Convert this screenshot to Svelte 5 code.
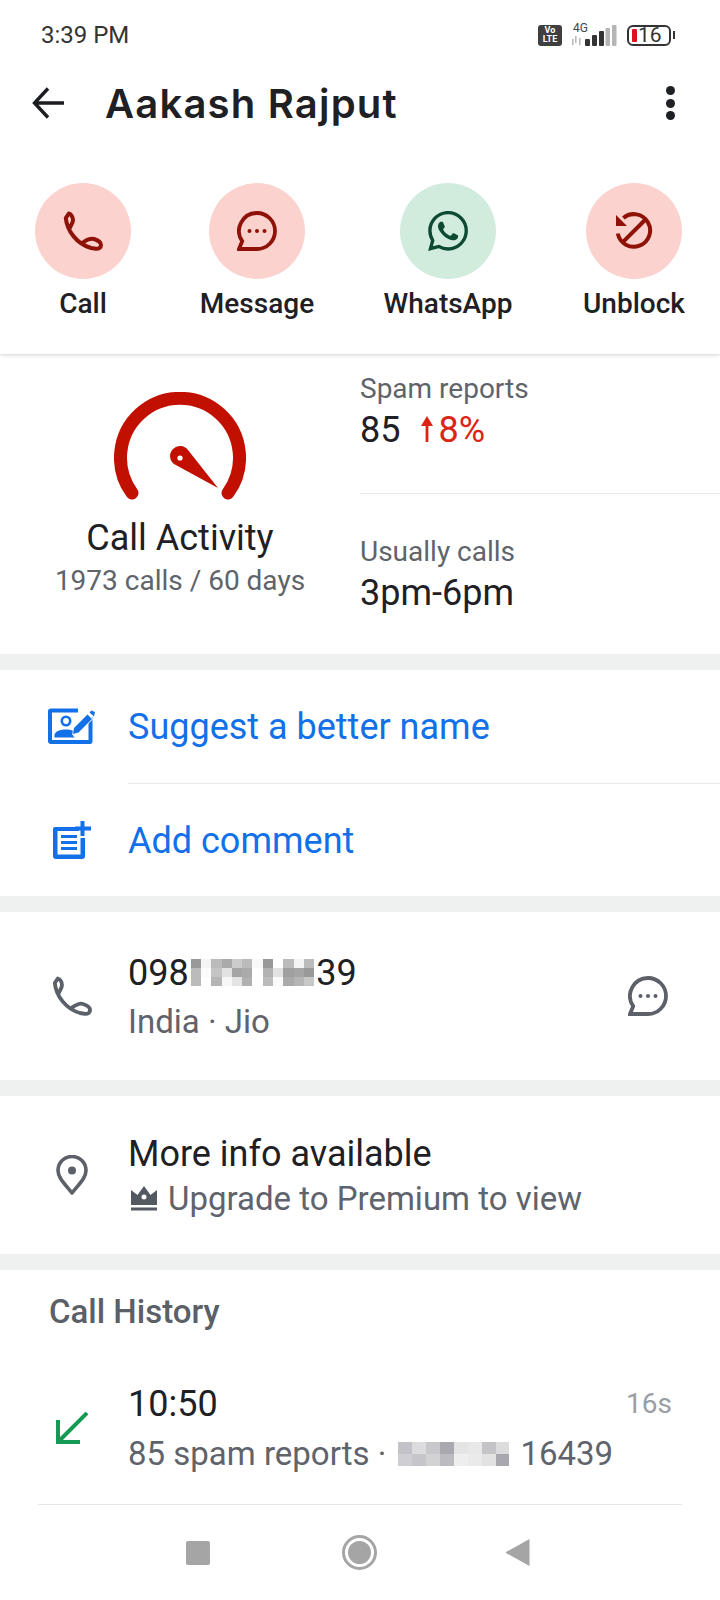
<script>
  const actions = [
    { label: 'Call', kind: 'red', icon: 'phone' },
    { label: 'Message', kind: 'red', icon: 'bubble' },
    { label: 'WhatsApp', kind: 'green', icon: 'whatsapp' },
    { label: 'Unblock', kind: 'red', icon: 'unblock' }
  ];

  const phoneD = 'M2.800 7 C4 20 14 33 28 37 L33 37.800 C36 38 38 36.500 38 34 C38 31 34 29 31 28 C28 27 23 29 20 31.500 M2.800 7 L5.800 2.500 C8 3 10 6 10 9 C10 12 8 14 6.500 17.500';
  const bubbleD = 'M20 2 A18 18 0 0 1 20 38 H2 L5.2 30.2 A18 18 0 0 1 20 2 Z';

  const blurPhone = [
    ['#999', '#f4f4f4', '#bbb', '#aaa', '#ccc', '#bbb', '#f8f8f8', '#999', '#fff', '#bbb', '#f4f4f4', '#bbb'],
    ['#bbb', '#fbfbfb', '#c4c4c4', '#e2e2e2', '#a5a5a5', '#aaa', '#fff', '#b2b2b2', '#e2e2e2', '#a0a0a0', '#a5a5a5', '#999'],
    ['#bbb', '#fff', '#b5b5b5', '#f6f6f6', '#e4e4e4', '#b0b0b0', '#fff', '#bbb', '#fafafa', '#aaa', '#b5b5b5', '#c8c8c8']
  ];
  const blurHistory = [
    ['#c2c2c8', '#dcdcdf', '#c8c8cc', '#a8a8ae', '#e4e4e4', '#e8e8e8', '#c4c4c8', '#dcdcdc'],
    ['#cfcfd3', '#c6c6ca', '#d2d2d4', '#bcbcc0', '#eeeeee', '#eaeaea', '#e2e2e2', '#a8a8ae']
  ];
</script>

{#snippet blur(rows, cls)}
  <span class="blur {cls}">
    {#each rows as row}
      <span class="blur-row">
        {#each row as c}<i style="background:{c}"></i>{/each}
      </span>
    {/each}
  </span>
{/snippet}

<div class="screen">
  <!-- top block -->
  <section class="top">
    <div class="status">
      <span class="time">3:39 PM</span>
      <div class="status-icons">
        <span class="volte">Vo<br />LTE</span>
        <span class="signal">
          <span class="fourg">4G</span>
          <svg width="46" height="21" viewBox="0 0 46 21">
            <rect x="1" y="14" width="1.6" height="6" fill="#bbb" />
            <rect x="4" y="11" width="1.6" height="7" fill="#bbb" />
            <rect x="8" y="13" width="1.6" height="7" fill="#bbb" />
            <rect x="14" y="14" width="5" height="7" rx="1" fill="#333" />
            <rect x="21" y="10" width="5" height="11" rx="1" fill="#333" />
            <rect x="28" y="6" width="5" height="15" rx="1" fill="#333" />
            <rect x="34.5" y="3" width="4.5" height="18" rx="1" fill="#b5b5b5" />
            <rect x="41" y="0" width="4.5" height="21" rx="1" fill="#b5b5b5" />
          </svg>
        </span>
        <span class="battery">
          <i class="level"></i><span>16</span>
        </span>
        <i class="nub"></i>
      </div>
    </div>

    <header class="bar">
      <svg class="back" width="32" height="32" viewBox="0 0 32 32" fill="none" stroke="#1c1d21" stroke-width="3.4">
        <path d="M32 16 H3 M16 1.5 L2.5 16 L16 30.5" />
      </svg>
      <h1>Aakash Rajput</h1>
      <span class="dots"><i></i><i></i><i></i></span>
    </header>

    <div class="actions">
      {#each actions as a}
        <div class="action">
          <span class="circle {a.kind}">
            {#if a.icon === 'phone'}
              <svg width="40" height="40" viewBox="0 0 40 40" fill="none" stroke="#8e1207" stroke-width="4" stroke-linejoin="round" stroke-linecap="round"><path d={phoneD} /></svg>
            {:else if a.icon === 'bubble'}
              <svg width="40" height="40" viewBox="0 0 40 40" fill="none" stroke="#8e1207" stroke-width="3.8"><path d={bubbleD} /><circle cx="12.5" cy="20" r="2" fill="#8e1207" stroke="none" /><circle cx="20" cy="20" r="2" fill="#8e1207" stroke="none" /><circle cx="27.5" cy="20" r="2" fill="#8e1207" stroke="none" /></svg>
            {:else if a.icon === 'whatsapp'}
              <svg width="40" height="40" viewBox="0 0 24 24" fill="#0d4a32"><path d="M17.472 14.382c-.297-.149-1.758-.867-2.03-.967-.273-.099-.471-.148-.67.15-.197.297-.767.966-.94 1.164-.173.199-.347.223-.644.075-.297-.15-1.255-.463-2.39-1.475-.883-.788-1.48-1.761-1.653-2.059-.173-.297-.018-.458.13-.606.134-.133.298-.347.446-.52.149-.174.198-.298.298-.497.099-.198.05-.371-.025-.52-.075-.149-.669-1.612-.916-2.207-.242-.579-.487-.5-.669-.51-.173-.008-.371-.01-.57-.01-.198 0-.52.074-.792.372-.272.297-1.04 1.016-1.04 2.479 0 1.462 1.065 2.875 1.213 3.074.149.198 2.096 3.2 5.077 4.487.709.306 1.262.489 1.694.625.712.227 1.36.195 1.871.118.571-.085 1.758-.719 2.006-1.413.248-.694.248-1.289.173-1.413-.074-.124-.272-.198-.57-.347m-5.421 7.403h-.004a9.87 9.87 0 01-5.031-1.378l-.361-.214-3.741.982.998-3.648-.235-.374a9.86 9.86 0 01-1.51-5.26c.001-5.45 4.436-9.884 9.888-9.884 2.64 0 5.122 1.03 6.988 2.898a9.825 9.825 0 012.893 6.994c-.003 5.45-4.437 9.884-9.885 9.884m8.413-18.297A11.815 11.815 0 0012.05 0C5.495 0 .16 5.335.157 11.892c0 2.096.547 4.142 1.588 5.945L.057 24l6.305-1.654a11.882 11.882 0 005.683 1.448h.005c6.554 0 11.89-5.335 11.893-11.893a11.821 11.821 0 00-3.48-8.413Z" /></svg>
            {:else}
              <svg width="40" height="40" viewBox="0 0 40 40" fill="none" stroke="#8e1207" stroke-width="4"><path d="M9.300 7 A16.300 16.300 0 1 1 3.800 22.500" /><path d="M9.300 30.700 L31 9" /><path d="M2 4 V15 H13 Z" fill="#8e1207" stroke="none" /></svg>
            {/if}
          </span>
          <span class="action-label">{a.label}</span>
        </div>
      {/each}
    </div>
  </section>

  <!-- call activity -->
  <section class="stats">
    <div class="stats-left">
      <svg class="gauge" width="132" height="108" viewBox="0 0 132 108">
        <path d="M18 101 A59.5 59.5 0 1 1 114 101" fill="none" stroke="#c21000" stroke-width="13" stroke-linecap="round" />
        <path d="M59 57 A10 10 0 0 1 74 58 L104 96 L60 72 A10 10 0 0 1 59 57 Z" fill="#c21000" />
        <circle cx="66" cy="66" r="2.6" fill="#fff" />
      </svg>
      <div class="activity">Call Activity</div>
      <div class="activity-sub">1973 calls / 60 days</div>
    </div>
    <div class="stats-right">
      <div class="stat first">
        <div class="stat-label">Spam reports</div>
        <div class="stat-value">85 <span class="trend"><svg width="12" height="26" viewBox="0 0 12 26" fill="#dc2414"><path d="M6 0 L12 10 H7.4 V26 H4.6 V10 H0 Z" /></svg>8%</span></div>
      </div>
      <div class="stat second">
        <div class="stat-label">Usually calls</div>
        <div class="stat-value">3pm-6pm</div>
      </div>
    </div>
  </section>

  <!-- suggest / comment -->
  <section class="links">
    <div class="link">
      <span class="ico">
        <svg width="47" height="36" viewBox="0 0 47 36" fill="#1270e8">
          <path d="M3 0.500 H30 V4.500 H4 V32 H40.500 V13 L44.500 9 V33 Q44.500 36 42 36 H3 Q0 36 0 33 V3 Q0 0.500 3 0.500 Z" />
          <circle cx="18" cy="13" r="4.200" fill="none" stroke="#1270e8" stroke-width="2.600" />
          <path d="M6.500 29.500 V27.500 C6.500 23.500 12 21.500 18 21.500 C21 21.500 24 22 26.500 23.500 L25 28 L27 29.500 Z" />
          <path d="M26 20 L39.500 6.500 L44 11 L30.500 24.500 L25 26 Z" stroke="#fff" stroke-width="1.500" paint-order="stroke" />
          <path d="M41.500 4.500 L43.500 2.500 L47 4 L46 8.500 Z" />
        </svg>
      </span>
      <span class="link-text">Suggest a better name</span>
    </div>
    <div class="link-sep"></div>
    <div class="link">
      <span class="ico">
        <svg width="38" height="38" viewBox="0 0 38 38" fill="#1270e8">
          <path d="M2 6 H26 V10 H4.500 V33.500 H27.500 V17 H32 V35 Q32 38 29 38 H3 Q0 38 0 35 V8 Q0 6 2 6 Z" />
          <rect x="8" y="14" width="16" height="3" />
          <rect x="8" y="20" width="16" height="3" />
          <rect x="8" y="26" width="16" height="3" />
          <rect x="27.500" y="0" width="4" height="15" />
          <rect x="22" y="5.500" width="16" height="4" />
        </svg>
      </span>
      <span class="link-text">Add comment</span>
    </div>
  </section>

  <!-- number -->
  <section class="info number">
    <span class="ico">
      <svg width="40" height="40" viewBox="0 0 40 40" fill="none" stroke="#5c6068" stroke-width="3.8" stroke-linejoin="round" stroke-linecap="round"><path d={phoneD} /></svg>
    </span>
    <div class="info-text">
      <div class="primary num">098{@render blur(blurPhone, 'blur-phone')}39</div>
      <div class="secondary wide">India · Jio</div>
    </div>
    <svg class="msg" width="40" height="40" viewBox="0 0 40 40" fill="none" stroke="#5c6068" stroke-width="3.8"><path d={bubbleD} /><circle cx="12.5" cy="20" r="2" fill="#5c6068" stroke="none" /><circle cx="20" cy="20" r="2" fill="#5c6068" stroke="none" /><circle cx="27.5" cy="20" r="2" fill="#5c6068" stroke="none" /></svg>
  </section>

  <!-- more info -->
  <section class="info more">
    <span class="ico">
      <svg width="32" height="40" viewBox="0 0 32 40" fill="none" stroke="#5c6068" stroke-width="3.6"><path d="M16 38 C9 29 2 23 2 15.500 A14 14 0 0 1 30 15.500 C30 23 23 29 16 38 Z" stroke-linejoin="round" /><circle cx="16" cy="15.500" r="4" fill="#5c6068" stroke="none" /></svg>
    </span>
    <div class="info-text">
      <div class="primary">More info available</div>
      <div class="secondary upgrade">
        <svg width="26" height="25" viewBox="0 0 26 25" fill="#555962"><path fill-rule="evenodd" d="M0 4 L6.500 9 L13 0 L19.500 9 L26 4 V19 H0 Z M13 8.500 A2.500 2.500 0 1 0 13 13.500 A2.500 2.500 0 1 0 13 8.500 Z" /><rect x="0" y="21.500" width="26" height="3" /></svg>
        <span>Upgrade to Premium to view</span>
      </div>
    </div>
  </section>

  <!-- call history -->
  <section class="history">
    <h2>Call History</h2>
    <div class="call">
      <span class="ico">
        <svg width="32" height="32" viewBox="0 0 32 32" fill="none" stroke="#149a55" stroke-width="4"><path d="M31 1 L3 29 M2 8 V30 H24" /></svg>
      </span>
      <div class="info-text">
        <div class="primary">10:50</div>
        <div class="secondary num tight">85 spam reports ·{@render blur(blurHistory, 'blur-history')}16439</div>
      </div>
      <span class="dur">16s</span>
    </div>
    <div class="call-sep"></div>
  </section>

  <!-- nav -->
  <nav class="nav">
    <i class="nav-square"></i>
    <span class="nav-home"><i></i></span>
    <svg width="24" height="27" viewBox="0 0 24 27" fill="#a5a5a5"><path d="M23.500 0 V27 L0 14 Q-.5 13.500 0 13 Z" /></svg>
  </nav>
</div>

<style>
  :global(body) {
    margin: 0;
    background: #fff;
  }

  .screen {
    width: 720px;
    height: 1600px;
    overflow: hidden;
    background: #eff1f0;
    font-family: Roboto, sans-serif;
    color: #1f2024;
  }

  section {
    background: #fff;
  }

  i {
    display: block;
  }

  /* top block */
  .top {
    position: relative;
    height: 354px;
    box-shadow: 0 1px 4px rgba(0, 0, 0, 0.18);
  }

  .status {
    height: 70px;
    display: flex;
    align-items: center;
    justify-content: space-between;
    padding: 0 45px 0 41px;
    color: #333;
  }
  .time {
    font-size: 24px;
  }
  .status-icons {
    display: flex;
    align-items: center;
  }
  .volte {
    width: 24px;
    height: 21px;
    box-sizing: border-box;
    border-radius: 3px;
    background: #3f3f3f;
    color: #fff;
    font-size: 9px;
    font-weight: 700;
    line-height: 9.5px;
    text-align: center;
    padding-top: 1px;
    margin-right: 9px;
  }
  .signal {
    position: relative;
    display: block;
    width: 46px;
    height: 21px;
    margin-right: 10px;
  }
  .signal svg {
    display: block;
  }
  .fourg {
    position: absolute;
    left: 2px;
    top: -3px;
    font-size: 12px;
    line-height: 13px;
    color: #444;
  }
  .battery {
    width: 44px;
    height: 21px;
    box-sizing: border-box;
    border: 2.500px solid #333;
    border-radius: 6px;
    display: flex;
    align-items: center;
    font-size: 21px;
    line-height: 16px;
    color: #333;
    padding-left: 3px;
  }
  .level {
    width: 5px;
    height: 13px;
    border-radius: 1px;
    background: #e01020;
    margin-right: 1px;
  }
  .nub {
    width: 2px;
    height: 8px;
    margin-left: 2px;
    background: #333;
  }

  .bar {
    height: 66px;
    display: flex;
    align-items: center;
    padding: 0 45px 0 32px;
  }
  .back {
    margin-right: 41px;
  }
  h1 {
    flex: 1;
    margin: 0;
    font-family: Inter, sans-serif;
    font-size: 40px;
    font-weight: 600;
    letter-spacing: 1.2px;
    color: #1f2024;
  }
  .dots {
    display: flex;
    flex-direction: column;
    gap: 3.500px;
  }
  .dots i {
    width: 9px;
    height: 9px;
    border-radius: 50%;
    background: #1f2024;
  }

  .actions {
    display: grid;
    grid-template-columns: 166px 182px 200px 172px;
    padding-top: 47px;
  }
  .action {
    display: flex;
    flex-direction: column;
    align-items: center;
  }
  .circle {
    width: 96px;
    height: 96px;
    border-radius: 50%;
    display: flex;
    align-items: center;
    justify-content: center;
  }
  .circle.red {
    background: #fbd2ce;
  }
  .circle.green {
    background: #d1ebdd;
  }
  .action-label {
    margin-top: 9px;
    font-size: 28px;
    line-height: 32px;
    font-weight: 500;
  }

  /* stats */
  .stats {
    height: 300px;
    display: flex;
    margin-bottom: 16px;
  }
  .stats-left {
    width: 360px;
    display: flex;
    flex-direction: column;
    align-items: center;
    padding-top: 38px;
    box-sizing: border-box;
  }
  .gauge {
    display: block;
  }
  .activity {
    margin-top: 18px;
    font-size: 36px;
    line-height: 40px;
  }
  .activity-sub {
    margin-top: 7px;
    font-size: 28px;
    line-height: 32px;
    color: #5f636b;
  }
  .stats-right {
    flex: 1;
  }
  .stat {
    box-sizing: border-box;
  }
  .stat.first {
    height: 140px;
    border-bottom: 1px solid #e9e9e9;
    padding-top: 19px;
  }
  .stat.second {
    padding-top: 42px;
  }
  .stat-label {
    font-size: 28px;
    line-height: 32px;
    color: #5f636b;
  }
  .stat-value {
    margin-top: 5px;
    font-size: 36px;
    line-height: 40px;
    color: #1f2024;
  }
  .trend {
    margin-left: 12px;
    color: #dc2414;
  }
  .trend svg {
    margin-right: 5px;
  }

  /* links */
  .ico {
    width: 128px;
    box-sizing: border-box;
    padding-left: 15px;
    flex: none;
    display: flex;
    justify-content: center;
    align-items: center;
  }
  .links {
    height: 226px;
    margin-bottom: 16px;
    display: flex;
    flex-direction: column;
  }
  .link {
    flex: 1;
    display: flex;
    align-items: center;
  }
  .link-text {
    padding-top: 2px;
    font-size: 36px;
    color: #1270e8;
  }
  .link-sep {
    height: 1px;
    margin-left: 128px;
    background: #e9e9e9;
  }

  /* info rows */
  .info {
    display: flex;
    align-items: center;
    height: 168px;
    margin-bottom: 16px;
    padding-right: 52px;
  }
  .info-text {
    flex: 1;
  }
  .primary {
    font-size: 36px;
    line-height: 40px;
    color: #1f2024;
  }
  .secondary {
    margin-top: 10px;
    font-size: 33px;
    line-height: 36px;
    color: #5f636b;
  }
  .secondary.wide {
    margin-top: 11px;
  }
  .secondary.tight {
    margin-top: 12px;
  }
  .num {
    display: flex;
    align-items: center;
  }
  .upgrade {
    display: flex;
    align-items: center;
    gap: 11px;
    margin-top: 7px;
    margin-left: 3px;
  }
  .more {
    height: 158px;
  }

  .blur {
    display: flex;
    flex-direction: column;
  }
  .blur-row {
    display: flex;
  }
  .blur-phone {
    margin: 0 2px 0 2px;
  }
  .blur-phone i {
    width: 10.300px;
    height: 9.300px;
  }
  .blur-history {
    margin: 0 11px 0 12px;
  }
  .blur-history i {
    width: 13.900px;
    height: 12px;
  }

  /* history */
  .history {
    height: 235px;
  }
  h2 {
    margin: 0;
    padding: 24px 0 0 49px;
    font-size: 33px;
    line-height: 36px;
    font-weight: 500;
    color: #5b5f68;
  }
  .call {
    display: flex;
    align-items: center;
    padding: 54px 48px 0 0;
  }
  .dur {
    align-self: flex-start;
    font-size: 28px;
    line-height: 40px;
    color: #9a9ea5;
  }
  .call-sep {
    height: 1px;
    margin: 32px 38px 0;
    background: #e6e6e6;
  }

  /* nav */
  .nav {
    height: 95px;
    background: #fff;
    display: flex;
    align-items: center;
  }
  .nav-square {
    width: 24px;
    height: 24px;
    border-radius: 2px;
    background: #a5a5a5;
    margin-left: 186px;
  }
  .nav-home {
    width: 35px;
    height: 35px;
    box-sizing: border-box;
    border: 3px solid #a5a5a5;
    border-radius: 50%;
    display: flex;
    align-items: center;
    justify-content: center;
    margin-left: 132px;
    margin-right: 129px;
  }
  .nav-home i {
    width: 23px;
    height: 23px;
    border-radius: 50%;
    background: #a5a5a5;
  }
</style>
